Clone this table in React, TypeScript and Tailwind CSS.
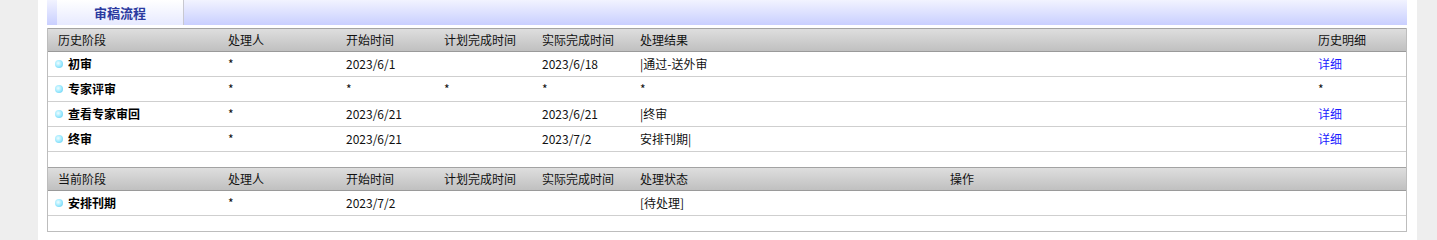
type HistoryRow = {
  stage: string;
  handler: string;
  start: string;
  planned: string;
  actual: string;
  result: string;
  detail: string;
};

const history: HistoryRow[] = [
  { stage: "初审", handler: "*", start: "2023/6/1", planned: "", actual: "2023/6/18", result: "|通过-送外审", detail: "详细" },
  { stage: "专家评审", handler: "*", start: "*", planned: "*", actual: "*", result: "*", detail: "*" },
  { stage: "查看专家审回", handler: "*", start: "2023/6/21", planned: "", actual: "2023/6/21", result: "|终审", detail: "详细" },
  { stage: "终审", handler: "*", start: "2023/6/21", planned: "", actual: "2023/7/2", result: "安排刊期|", detail: "详细" },
];

const histCols = "grid grid-cols-[180px_118px_98px_98px_98px_678px_1fr]";
const currCols = "grid grid-cols-[180px_118px_98px_98px_98px_310px_1fr]";

function Bullet() {
  return (
    <span className="inline-block h-[8px] w-[8px] rounded-full bg-[radial-gradient(circle_at_40%_40%,#f0fdff_0%,#a6ecff_45%,#52c8f0_100%)]" />
  );
}

function HeaderRow({ cols, cells }: { cols: string; cells: string[] }) {
  return (
    <div
      className={`${cols} h-[24px] items-center border-t border-b border-t-[#a3a3a3] border-b-[#9a9a9a] bg-gradient-to-b from-[#dedede] to-[#c0c0c0] text-[12px] text-[#111]`}
    >
      {cells.map((c, i) => (
        <div key={i} className={i === 0 ? "pl-[10px]" : ""}>
          {c}
        </div>
      ))}
    </div>
  );
}

function StageCell({ name }: { name: string }) {
  return (
    <div className="flex items-center gap-[5px] pl-[7px] font-bold text-black">
      <Bullet />
      <span>{name}</span>
    </div>
  );
}

export default function App() {
  return (
    <div
      className="flex h-[240px] w-[1437px] bg-white"
      style={{ fontFamily: '"Noto Sans CJK SC", "Microsoft YaHei", sans-serif' }}
    >
      <div className="w-[38px] shrink-0 bg-[#eeeeee]" />

      <div className="flex flex-1 flex-col px-[9px] pr-[10px]">
        {/* tab strip */}
        <div className="flex h-[25px] bg-gradient-to-b from-[#f2f3ff] to-[#c9cfff]">
          <div className="ml-[10px] flex w-[127px] items-center justify-center border-r border-r-[#c8c8d0] bg-gradient-to-b from-white to-[#e7eaff] text-[13px] font-bold text-[#2b3aa0]">
            审稿流程
          </div>
        </div>

        <div className="mt-[3px] border-x border-b border-[#bdbdbd] text-[12px] text-[#111]">
          {/* history stages */}
          <HeaderRow
            cols={histCols}
            cells={["历史阶段", "处理人", "开始时间", "计划完成时间", "实际完成时间", "处理结果", "历史明细"]}
          />
          {history.map((r) => (
            <div key={r.stage} className={`${histCols} h-[25px] items-center border-b border-[#cfcfcf]`}>
              <StageCell name={r.stage} />
              <div>{r.handler}</div>
              <div>{r.start}</div>
              <div>{r.planned}</div>
              <div>{r.actual}</div>
              <div>{r.result}</div>
              <div className={r.detail === "*" ? "" : "text-[#1a1aff]"}>{r.detail}</div>
            </div>
          ))}
          <div className="h-[15px]" />

          {/* current stage */}
          <HeaderRow
            cols={currCols}
            cells={["当前阶段", "处理人", "开始时间", "计划完成时间", "实际完成时间", "处理状态", "操作"]}
          />
          <div className={`${currCols} h-[25px] items-center border-b border-[#cfcfcf]`}>
            <StageCell name="安排刊期" />
            <div>*</div>
            <div>2023/7/2</div>
            <div />
            <div />
            <div>[待处理]</div>
            <div />
          </div>
          <div className="h-[15px]" />
        </div>
      </div>

      <div className="w-[20px] shrink-0 bg-[#eeeeee]" />
    </div>
  );
}
